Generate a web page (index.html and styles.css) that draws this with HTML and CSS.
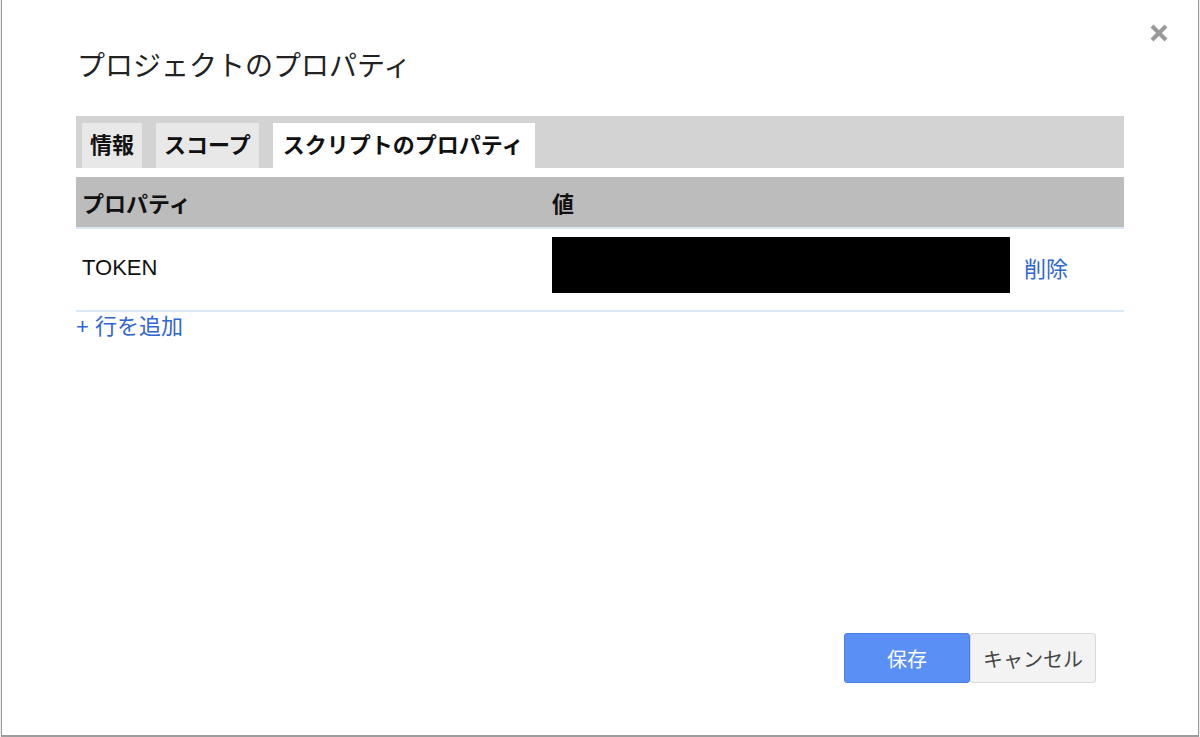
FILE: index.html
```html
<!DOCTYPE html>
<html lang="ja">
<head>
<meta charset="utf-8">
<title>プロジェクトのプロパティ</title>
<link rel="stylesheet" href="styles.css">
</head>
<body>
<div class="dialog">
  <button class="close" aria-label="閉じる">
    <svg width="20" height="20" viewBox="0 0 20 20"><path d="M3 3 L17 17 M17 3 L3 17" stroke="#9a9a9a" stroke-width="4.2" stroke-linecap="butt" fill="none"/></svg>
  </button>
  <h1 class="title">プロジェクトのプロパティ</h1>
  <div class="tabbar">
    <div class="tab">情報</div>
    <div class="tab">スコープ</div>
    <div class="tab active">スクリプトのプロパティ</div>
  </div>
  <div class="table">
    <div class="thead">
      <div class="cell-prop">プロパティ</div>
      <div class="cell-val">値</div>
    </div>
    <div class="row">
      <div class="cell-prop token">TOKEN</div>
      <div class="cell-val value">
        <div class="secret"></div>
        <a class="link" href="#">削除</a>
      </div>
    </div>
  </div>
  <a class="link addrow" href="#">+ 行を追加</a>
  <div class="footer">
    <button class="btn primary">保存</button>
    <button class="btn">キャンセル</button>
  </div>
</div>
</body>
</html>
```

FILE: styles.css
```css
html, body {
  margin: 0;
  padding: 0;
  background: #ffffff;
  overflow: hidden;
}
body {
  width: 1200px;
  height: 737px;
  font-family: "Liberation Sans", "Noto Sans CJK JP", sans-serif;
}
.dialog {
  position: relative;
  box-sizing: border-box;
  margin-left: 1px;
  width: 1198px;
  height: 737px;
  border: 1px solid #9c9c9c;
  border-top: none;
  border-bottom-width: 2px;
  box-shadow: 0 0 2px rgba(0,0,0,0.25);
  background: #fff;
  padding: 51px 74px 52px 74px;
  display: flex;
  flex-direction: column;
}
.close {
  position: absolute;
  top: 23px;
  right: 29px;
  width: 20px;
  height: 20px;
  padding: 0;
  border: none;
  background: none;
  display: block;
}
.close svg { display: block; }
.title {
  margin: 0;
  font-size: 28px;
  line-height: 32px;
  font-weight: normal;
  color: #222;
  padding-left: 1px;
}
.tabbar {
  margin-top: 33px;
  height: 52px;
  box-sizing: border-box;
  background: #d3d3d3;
  padding: 7px 0 0 6px;
  display: flex;
  gap: 14px;
}
.tab {
  height: 45px;
  line-height: 45px;
  padding: 0 8px;
  background: #e8e8e8;
  font-size: 22px;
  font-weight: bold;
  color: #111;
}
.tab.active {
  background: #fff;
  padding: 0 12px 0 10px;
}
.table {
  margin-top: 9px;
}
.thead {
  display: flex;
  height: 50px;
  align-items: center;
  background: #bcbcbc;
  border-bottom: 2px solid #dce7f7;
  font-size: 22px;
  font-weight: bold;
  color: #111;
}
.cell-prop {
  width: 470px;
  padding-left: 6px;
  box-sizing: border-box;
  flex: none;
}
.cell-val {
  padding-left: 6px;
  flex: 1;
}
.row {
  display: flex;
  align-items: center;
  padding: 8px 0 17px;
  border-bottom: 2px solid #dce7f7;
}
.token {
  font-size: 22px;
  color: #111;
  padding-top: 6px;
}
.value {
  display: flex;
  align-items: center;
  gap: 14px;
}
.secret {
  width: 458px;
  height: 56px;
  background: #000;
}
.link {
  color: #2f66d2;
  text-decoration: none;
  font-size: 22px;
  padding-top: 4px;
}
.addrow {
  display: block;
  align-self: flex-start;
  margin-top: 2px;
  padding-top: 0;
  line-height: 26px;
  padding-left: 0;
}
.footer {
  margin-top: auto;
  display: flex;
  justify-content: flex-end;
  padding-right: 28px;
}
.btn {
  box-sizing: border-box;
  width: 126px;
  height: 50px;
  border: 1px solid #d9d9d9;
  border-radius: 3px;
  background: #f3f3f3;
  color: #444;
  font-family: "Liberation Sans", "Noto Sans CJK JP", sans-serif;
  font-size: 20px;
  padding: 0;
}
.btn.primary {
  background: #5a8ff5;
  border-color: #4a7fe8;
  color: #fff;
}
```
